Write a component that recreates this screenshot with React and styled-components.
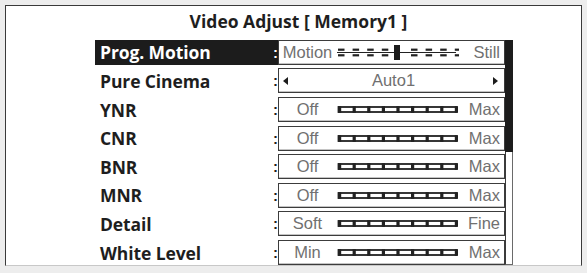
import React from 'react';
import styled, { createGlobalStyle } from 'styled-components';

const GlobalStyle = createGlobalStyle`
  html, body {
    margin: 0;
    padding: 0;
    background: #ffffff;
  }
`;

const Page = styled.div`
  width: 587px;
  height: 273px;
  background: #ededed;
  box-sizing: border-box;
  padding: 5px 5px 0 5px;
`;

const Frame = styled.div`
  height: 261px;
  background: #ffffff;
  border: 1px solid #3a3a3a;
  border-bottom-color: #c8c8c8;
  box-sizing: border-box;
  display: flex;
  flex-direction: column;
`;

const Title = styled.div`
  font-family: 'Open Sans', 'Noto Sans', sans-serif;
  font-weight: 700;
  font-size: 17.5px;
  line-height: 22px;
  color: #1e1e1e;
  text-align: center;
  padding-top: 4px;
  height: 28px;
  margin-left: 10px;
`;

const Body = styled.div`
  display: flex;
  padding-left: 89px;
  margin-top: 4px;
`;

const List = styled.div`
  display: flex;
  flex-direction: column;
  gap: 3.6px;
`;

const Row = styled.div`
  display: flex;
  height: 25px;
  align-items: stretch;
`;

const Label = styled.div`
  width: 178px;
  box-sizing: border-box;
  padding-left: 5px;
  display: flex;
  align-items: center;
  font-family: 'Open Sans', 'Noto Sans', sans-serif;
  font-weight: 700;
  font-size: 17.5px;
  letter-spacing: -0.1px;
  color: ${p => (p.$active ? '#ffffff' : '#1e1e1e')};
  background: ${p => (p.$active ? '#1c1c1c' : 'transparent')};
`;

const Colon = styled.div`
  width: 5px;
  display: flex;
  align-items: center;
  font-family: 'Liberation Sans', sans-serif;
  font-weight: 700;
  font-size: 15px;
  color: ${p => (p.$active ? '#ffffff' : '#1e1e1e')};
  background: ${p => (p.$active ? '#1c1c1c' : 'transparent')};
`;

const ValueBox = styled.div`
  width: 227px;
  box-sizing: border-box;
  border: 1px solid #3c3c3c;
  box-shadow: inset 0 -1px 0 #c4c4c4;
  display: grid;
  grid-template-columns: 58px 122px 1fr;
  align-items: center;
  font-family: 'Liberation Sans', sans-serif;
  font-size: 16.5px;
  color: #707070;
`;

const MinText = styled.span`
  text-align: center;
  margin-left: -1px;
`;

const MaxText = styled.span`
  text-align: right;
  padding-right: 4px;
`;

const SelectBox = styled(ValueBox)`
  display: flex;
  justify-content: space-between;
  padding: 0 6px 0 4px;
`;

const Arrow = styled.span`
  width: 0;
  height: 0;
  border-top: 4px solid transparent;
  border-bottom: 4px solid transparent;
  ${p => (p.$dir === 'left'
    ? 'border-right: 5px solid #1c1c1c;'
    : 'border-left: 5px solid #1c1c1c;')}
`;

const SelectText = styled.span`
  margin-left: 6px;
`;

const Scrollbar = styled.div`
  width: 8px;
  box-sizing: border-box;
  border: 1px solid #6a6a6a;
  border-left-color: #3a3a3a;
  display: flex;
  flex-direction: column;
`;

const Thumb = styled.div`
  height: 112px;
  background: #1c1c1c;
  margin: -1px -1px 0 -1px;
`;

function Track() {
  const ticks = [];
  for (let i = 0; i < 9; i++) {
    ticks.push(1 + i * 14.6);
  }
  return (
    <svg width="122" height="11" viewBox="0 0 122 11">
      <rect x="1.5" y="3" width="118" height="5" fill="#fff" stroke="#222" strokeWidth="1.8" />
      {ticks.map((x, i) => (
        <rect key={i} x={x} y="2.2" width="3.2" height="6.6" fill="#222" />
      ))}
    </svg>
  );
}

function DashedTrack() {
  const dashes = [];
  for (let i = 0; i < 9; i++) {
    if (i === 4) continue;
    dashes.push(1 + i * 14.6);
  }
  return (
    <svg width="122" height="17" viewBox="0 0 122 17">
      <line x1="0" y1="8.5" x2="119" y2="8.5" stroke="#222" strokeWidth="1.2" />
      {dashes.map((x, i) => (
        <g key={i}>
          <rect x={x} y="4.6" width="6.5" height="2.2" fill="#222" />
          <rect x={x} y="10.2" width="6.5" height="2.2" fill="#222" />
        </g>
      ))}
      <rect x="57" y="1" width="6" height="15" fill="#1c1c1c" />
    </svg>
  );
}

const rows = [
  { label: 'Prog. Motion', min: 'Motion', max: 'Still', active: true, dashed: true },
  { label: 'Pure Cinema', select: 'Auto1' },
  { label: 'YNR', min: 'Off', max: 'Max' },
  { label: 'CNR', min: 'Off', max: 'Max' },
  { label: 'BNR', min: 'Off', max: 'Max' },
  { label: 'MNR', min: 'Off', max: 'Max' },
  { label: 'Detail', min: 'Soft', max: 'Fine' },
  { label: 'White Level', min: 'Min', max: 'Max' },
];

export default function App() {
  return (
    <>
      <GlobalStyle />
      <Page>
        <Frame>
          <Title>Video Adjust [ Memory1 ]</Title>
          <Body>
            <List>
              {rows.map(r => (
                <Row key={r.label}>
                  <Label $active={r.active}>{r.label}</Label>
                  <Colon $active={r.active}>:</Colon>
                  {r.select ? (
                    <SelectBox>
                      <Arrow $dir="left" />
                      <SelectText>{r.select}</SelectText>
                      <Arrow $dir="right" />
                    </SelectBox>
                  ) : (
                    <ValueBox>
                      <MinText>{r.min}</MinText>
                      {r.dashed ? <DashedTrack /> : <Track />}
                      <MaxText>{r.max}</MaxText>
                    </ValueBox>
                  )}
                </Row>
              ))}
            </List>
            <Scrollbar>
              <Thumb />
            </Scrollbar>
          </Body>
        </Frame>
      </Page>
    </>
  );
}
